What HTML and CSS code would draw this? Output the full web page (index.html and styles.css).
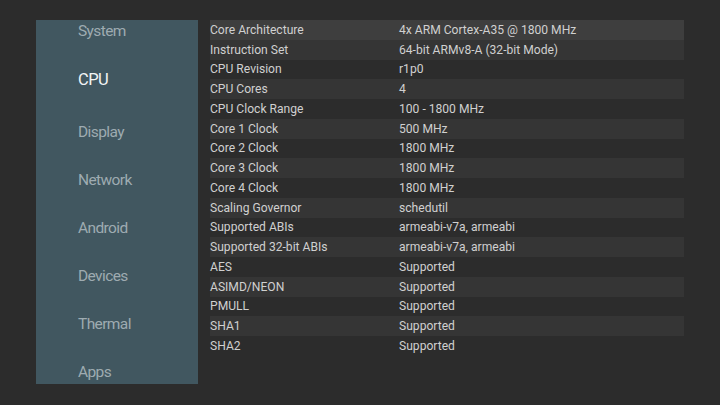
FILE: index.html
```html
<!DOCTYPE html>
<html>
<head>
<meta charset="utf-8">
<link rel="stylesheet" href="styles.css">
</head>
<body>
<div class="screen">
  <nav class="sidebar">
    <ul class="menu">
      <li class="item">System</li>
      <li class="item active">CPU</li>
      <li class="item">Display</li>
      <li class="item">Network</li>
      <li class="item">Android</li>
      <li class="item">Devices</li>
      <li class="item">Thermal</li>
      <li class="item">Apps</li>
    </ul>
  </nav>
  <div class="table">
    <div class="row focus"><span class="k">Core Architecture</span><span class="v">4x ARM Cortex-A35 @ 1800 MHz</span></div>
    <div class="row alt"><span class="k">Instruction Set</span><span class="v">64-bit ARMv8-A (32-bit Mode)</span></div>
    <div class="row"><span class="k">CPU Revision</span><span class="v">r1p0</span></div>
    <div class="row alt"><span class="k">CPU Cores</span><span class="v">4</span></div>
    <div class="row"><span class="k">CPU Clock Range</span><span class="v">100 - 1800 MHz</span></div>
    <div class="row alt"><span class="k">Core 1 Clock</span><span class="v">500 MHz</span></div>
    <div class="row"><span class="k">Core 2 Clock</span><span class="v">1800 MHz</span></div>
    <div class="row alt"><span class="k">Core 3 Clock</span><span class="v">1800 MHz</span></div>
    <div class="row"><span class="k">Core 4 Clock</span><span class="v">1800 MHz</span></div>
    <div class="row alt"><span class="k">Scaling Governor</span><span class="v">schedutil</span></div>
    <div class="row"><span class="k">Supported ABIs</span><span class="v">armeabi-v7a, armeabi</span></div>
    <div class="row alt"><span class="k">Supported 32-bit ABIs</span><span class="v">armeabi-v7a, armeabi</span></div>
    <div class="row"><span class="k">AES</span><span class="v">Supported</span></div>
    <div class="row alt"><span class="k">ASIMD/NEON</span><span class="v">Supported</span></div>
    <div class="row"><span class="k">PMULL</span><span class="v">Supported</span></div>
    <div class="row alt"><span class="k">SHA1</span><span class="v">Supported</span></div>
    <div class="row"><span class="k">SHA2</span><span class="v">Supported</span></div>
  </div>
</div>
</body>
</html>
```
FILE: styles.css
```css
html, body {
  margin: 0;
  padding: 0;
  background: #2c2c2c;
  width: 720px;
  height: 405px;
  overflow: hidden;
}
.screen {
  display: flex;
  align-items: flex-start;
  padding: 20px 0 0 36px;
  gap: 12px;
  font-family: Roboto, "Liberation Sans", sans-serif;
}
.sidebar {
  width: 162px;
  height: 364px;
  background: #415760;
  overflow: hidden;
}
.menu {
  list-style: none;
  margin: -13px 0 0 0;
  padding: 0 0 0 42px;
  display: flex;
  flex-direction: column;
}
.item {
  height: 48px;
  display: flex;
  align-items: center;
  font-size: 15.5px;
  letter-spacing: -0.6px;
  color: #9eabb1;
}
.item.active {
  color: #f2f4f5;
  font-size: 16.5px;
  margin-bottom: 5px;
}
.table {
  width: 474px;
  display: flex;
  flex-direction: column;
}
.row {
  height: 19.75px;
  display: flex;
  align-items: center;
  font-size: 12.1px;
  color: #d0d0d0;
}
.row.alt {
  background: #353535;
}
.row.focus {
  background: #3e3e3e;
}
.k {
  width: 189px;
}
.v {
  flex: 1;
}
```
